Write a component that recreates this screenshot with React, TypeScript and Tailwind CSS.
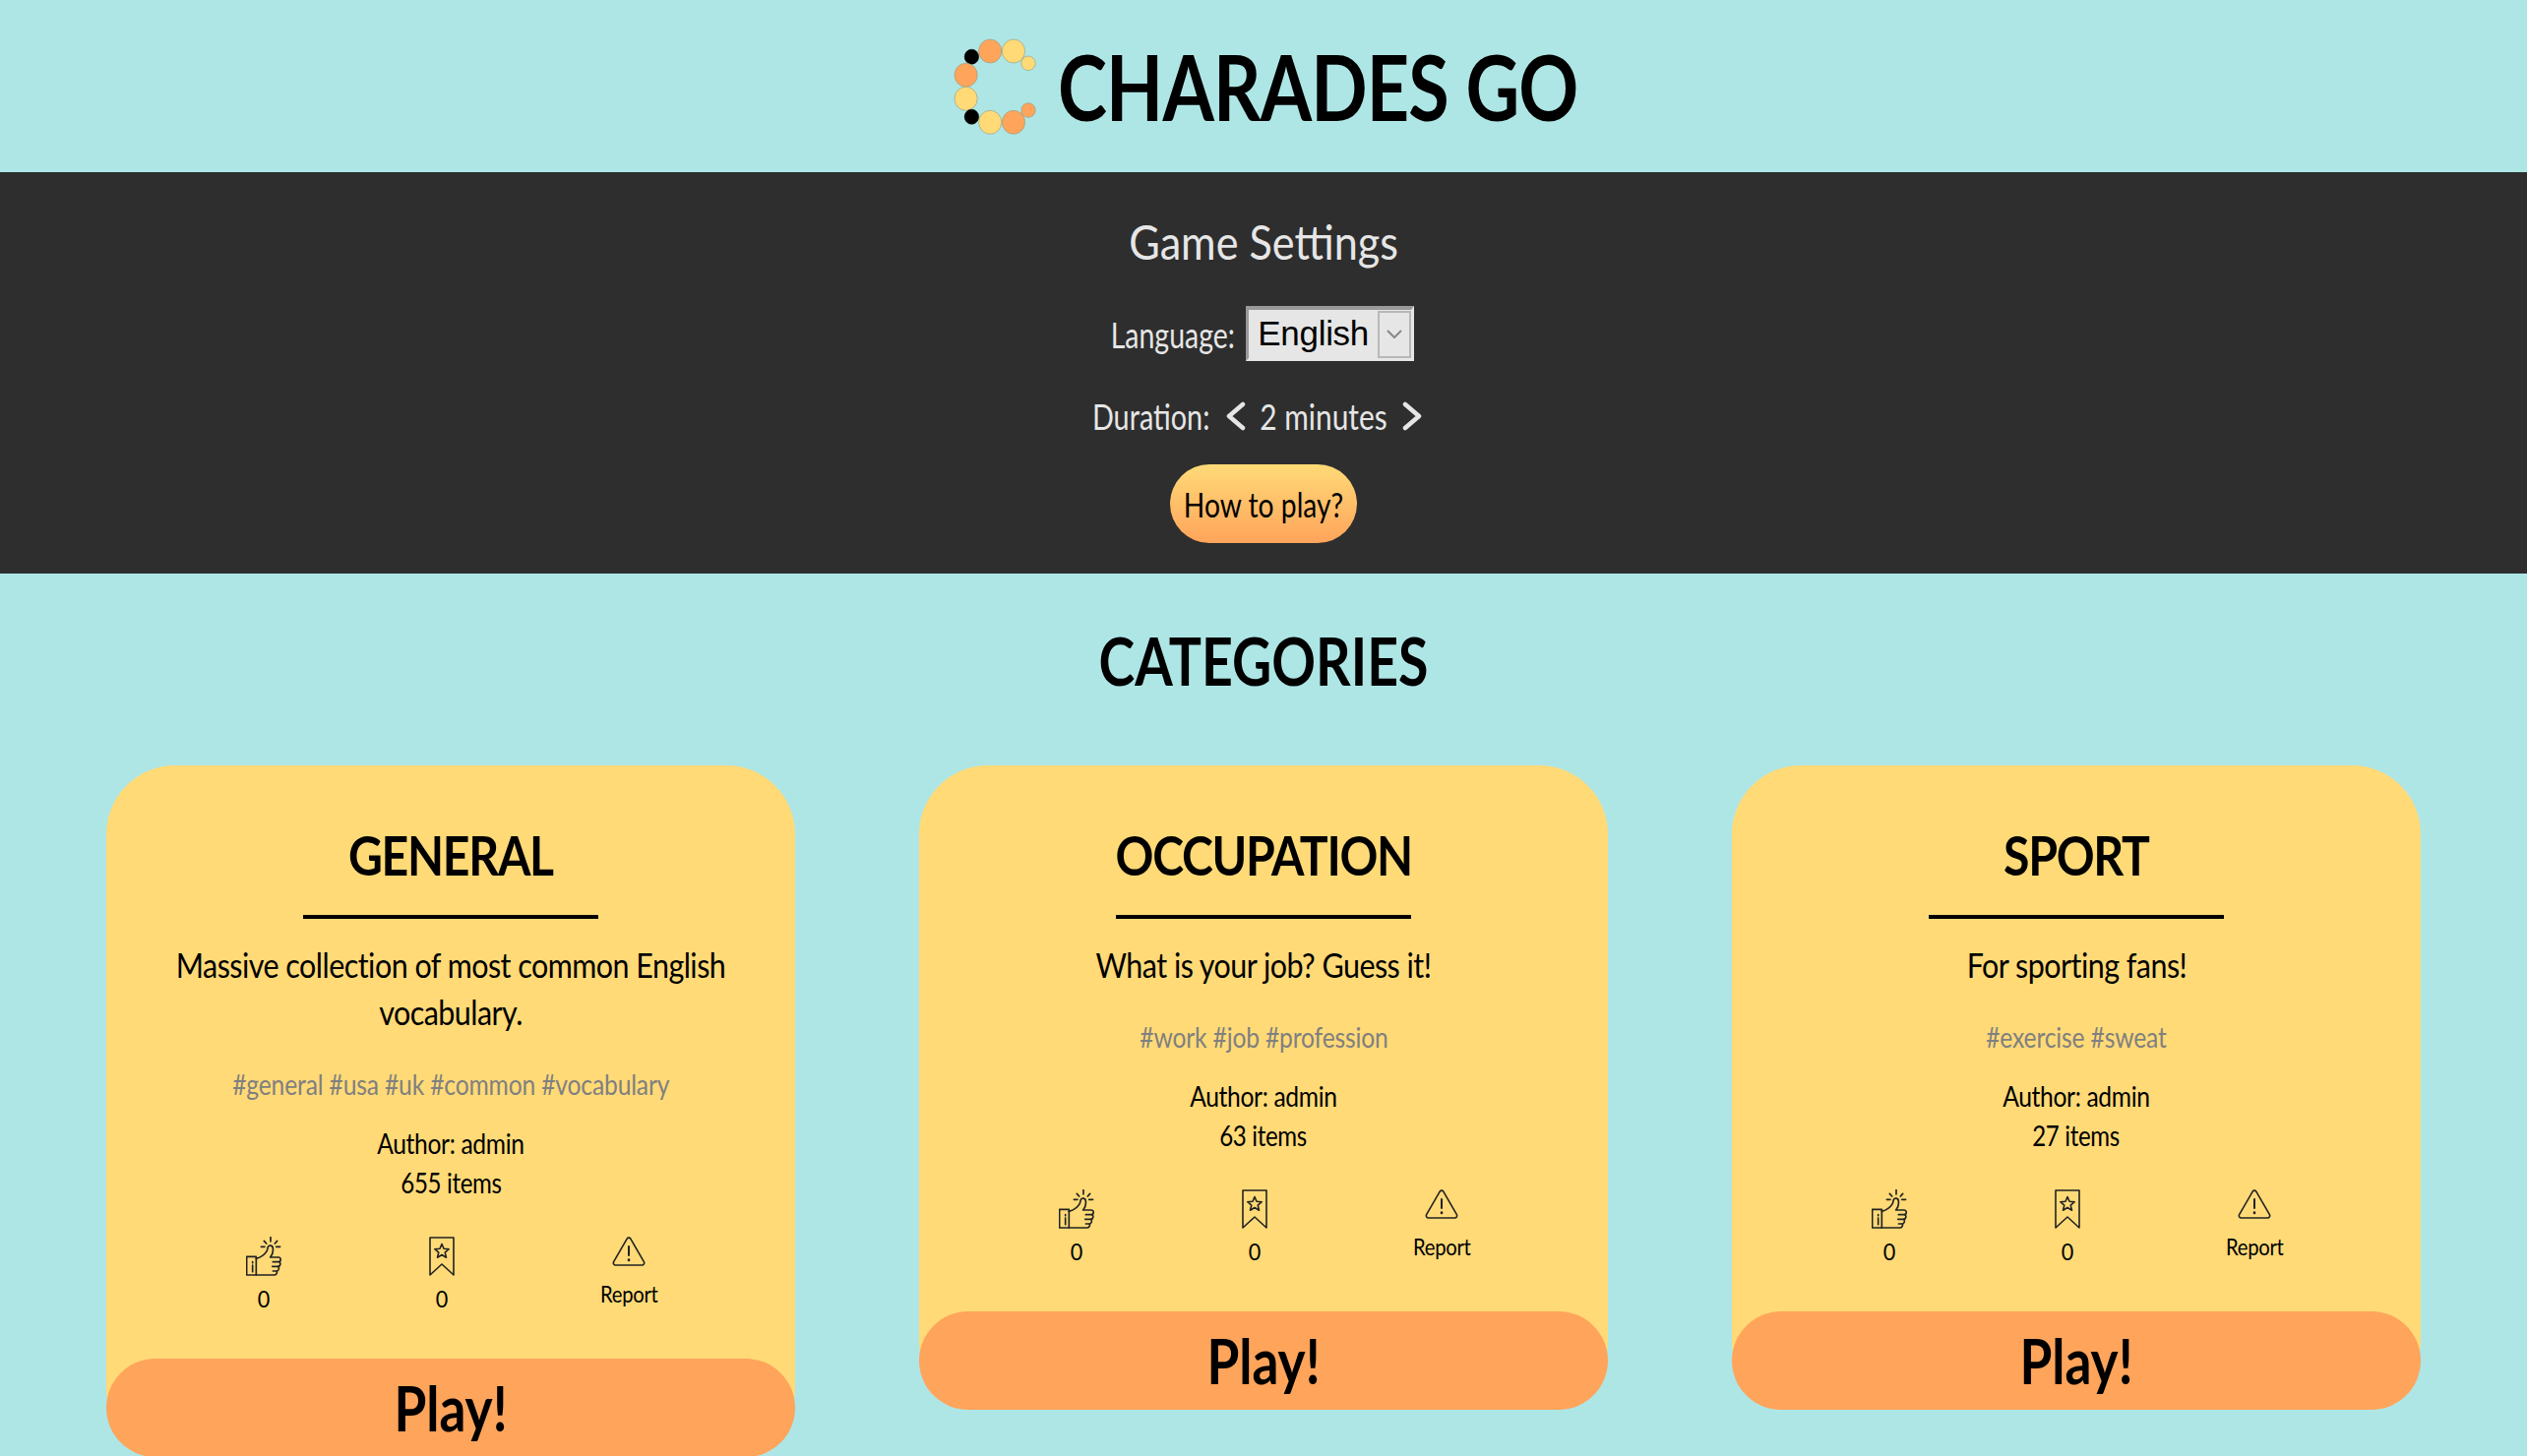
const Logo = () => (
  <svg width="86" height="102" viewBox="972 36 86 102" className="shrink-0">
    {[
      [990.4, 56.7, 7.2, 7.5, "#000", "#000"],
      [1009.2, 51, 11.6, 12, "#ffa45b", "#8f9a80"],
      [1033, 51, 11.6, 12, "#ffda77", "#8f9a80"],
      [1048, 63.3, 7.2, 7.3, "#ffda77", "#8f9a80"],
      [984.6, 75.3, 11.6, 12, "#ffa45b", "#8f9a80"],
      [984.6, 99.3, 11.6, 12, "#ffda77", "#8f9a80"],
      [990.4, 117.7, 7.2, 7.5, "#000", "#000"],
      [1009.2, 123.3, 11.6, 12, "#ffda77", "#8f9a80"],
      [1033, 123.3, 11.6, 12, "#ffa45b", "#8f9a80"],
      [1048, 111, 7.2, 7.3, "#ffa45b", "#8f9a80"],
    ].map(([cx, cy, rx, ry, f, s], i) => (
      <ellipse key={i} cx={cx as number} cy={cy as number} rx={rx as number} ry={ry as number} fill={f as string} stroke={s as string} strokeWidth="0.6" />
    ))}
  </svg>
);

const Thumb = () => (
  <svg width="36" height="40" viewBox="0 0 108 118" fill="none" stroke="#222" strokeWidth="5" strokeLinecap="round" strokeLinejoin="round">
    <rect x="2" y="60" width="29" height="56" />
    <path d="M20 76v3M20 86v20" />
    <path d="M31 66C45 62 58 52 64 42L67 30C70 24 82 25 82 35C84 48 79 56 74 62L100 62C108 63 107 75 101 76C107 78 105 90 98 90C102 94 100 104 94 104C96 110 92 116 86 116L31 116" />
    <path d="M101 76H82M98 90H80M94 104H82" />
    <path d="M75 1V14M55 12L62 20M95 12L88 20M46 30H57M92 30H104" />
  </svg>
);

const Bookmark = () => (
  <svg width="26" height="40" viewBox="0 0 26 40" fill="none" stroke="#222" strokeWidth="1.6" strokeLinejoin="round">
    <path d="M1 1H25V39L13 28L1 39Z" />
    <path d="M13 7.5L15 12.2L20.2 12.7L16.2 16.1L17.5 21.2L13 18.5L8.5 21.2L9.8 16.1L5.8 12.7L11 12.2Z" />
  </svg>
);

const Warning = () => (
  <svg width="34" height="30" viewBox="0 0 34 30" fill="none" stroke="#222" strokeWidth="1.6" strokeLinecap="round" strokeLinejoin="round">
    <path d="M15.2 2.2C16 0.8 18 0.8 18.8 2.2L32.4 25.6C33.2 27 32.2 29 30.4 29H3.6C1.8 29 0.8 27 1.6 25.6Z" />
    <path d="M17 10V19" strokeWidth="2" />
    <path d="M17 23.6V24" strokeWidth="2.6" />
  </svg>
);

const Chevron = ({ right }: { right?: boolean }) => (
  <svg width="20" height="30" viewBox="0 0 20 30" fill="none" stroke="#e6e6e6" strokeWidth="4.5" strokeLinecap="round" strokeLinejoin="round">
    <path d={right ? "M3 3L17 15L3 27" : "M17 3L3 15L17 27"} />
  </svg>
);

type Cat = { title: string; desc: string[]; tags: string; items: string };

const Card = ({ c }: { c: Cat }) => (
  <div className="w-[700px] bg-[#ffda77] rounded-[70px] flex flex-col items-center text-black text-center">
    <h3 className="mt-[61px] h-[60px] leading-[60px] text-[56px] font-bold tracking-[-1.5px] scale-x-[.86]">{c.title}</h3>
    <div className="mt-[31px] w-[300px] h-[4px] bg-black" />
    <div className="mt-[22px] text-[35px] leading-[48px] tracking-[-0.6px] scale-x-[.87]">
      {c.desc.map((d) => (
        <p key={d} className="whitespace-nowrap">{d}</p>
      ))}
    </div>
    <p className="mt-[30px] h-[40px] leading-[40px] text-[29px] text-[#808080] tracking-[-0.2px] scale-x-[.85]">{c.tags}</p>
    <p className="mt-[20px] h-[40px] leading-[40px] text-[28px] tracking-[-0.4px] scale-x-[.88]">Author: admin</p>
    <p className="h-[40px] leading-[40px] text-[28px] tracking-[-0.4px] scale-x-[.86]">{c.items}</p>
    <div className="mt-[35px] w-full h-[124px] flex leading-[28px]">
      <div className="ml-[110px] w-[100px] flex flex-col items-center">
        <Thumb />
        <span className="mt-[9px] text-[24px] scale-x-[.9]">0</span>
      </div>
      <div className="ml-[81px] w-[100px] flex flex-col items-center">
        <Bookmark />
        <span className="mt-[9px] text-[24px] scale-x-[.9]">0</span>
      </div>
      <div className="ml-[90px] w-[100px] flex flex-col items-center">
        <Warning />
        <span className="mt-[14px] text-[23px] tracking-[-0.3px] scale-x-[.88]">Report</span>
      </div>
    </div>
    <button className="w-full h-[100px] bg-[#ffa45b] rounded-[50px] font-bold text-black">
      <span className="block text-[64px] leading-[100px] whitespace-nowrap scale-x-[.83]">Play!</span>
    </button>
  </div>
);

const cats: Cat[] = [
  { title: "GENERAL", desc: ["Massive collection of most common English", "vocabulary."], tags: "#general #usa #uk #common #vocabulary", items: "655 items" },
  { title: "OCCUPATION", desc: ["What is your job? Guess it!"], tags: "#work #job #profession", items: "63 items" },
  { title: "SPORT", desc: ["For sporting fans!"], tags: "#exercise #sweat", items: "27 items" },
];

export default function App() {
  return (
    <div className="h-[1480px] overflow-hidden bg-[#aee6e6] font-['Lato',sans-serif]">
      <header className="h-[175px] flex items-center justify-center gap-[20px] pl-[5px]">
        <Logo />
        <h1 className="-mx-[58px] text-[92px] font-bold leading-none text-black tracking-[-1px] whitespace-nowrap scale-x-[.82]">CHARADES GO</h1>
      </header>
      <section className="h-[408px] bg-[#2e2e2e] text-[#e6e6e6] flex flex-col items-center">
        <h2 className="mt-[43px] h-[56px] leading-[56px] text-[48px] scale-x-[.9]">Game Settings</h2>
        <div className="mt-[37px] h-[56px] flex items-center gap-[9px] text-[36px] mr-[4px]">
          <span className="-mx-[15px] scale-x-[.79] mt-[2px]">Language:</span>
          <div className="w-[171px] h-[56px] ml-[1px] bg-[#e6e6e6] border-[3px] border-t-[4px] border-t-[#999999] border-l-[#999999] border-r-[#e6e6e6] border-b-[#e6e6e6] flex items-center text-black pl-[9px] font-['Liberation_Sans',sans-serif] text-[35px] tracking-[-0.3px] justify-between">
            <span>English</span>
            <span className="w-[34px] h-[48px] border-[2px] border-[#b8b8b8] flex items-center justify-center">
              <svg width="16" height="10" viewBox="0 0 16 10" fill="none" stroke="#888" strokeWidth="2">
                <path d="M1 1L8 8L15 1" />
              </svg>
            </span>
          </div>
        </div>
        <div className="mt-[28px] h-[56px] flex items-center text-[36px] mr-[13px]">
          <span className="-mx-[15px] scale-x-[.8]">Duration:</span>
          <span className="ml-[16px] -mr-[15px]"><Chevron /></span>
          <span className="ml-[16px] -mr-[1px] scale-x-[.83]">2 minutes</span>
          <span className="ml-[3px]"><Chevron right /></span>
        </div>
        <button className="mt-[21px] w-[190px] h-[80px] rounded-[40px] bg-gradient-to-b from-[#ffda77] to-[#ffa45b] text-black">
          <span className="block -mx-[10px] text-[34px] whitespace-nowrap scale-x-[.83]">How to play?</span>
        </button>
      </section>
      <h2 className="mt-[57px] h-[64px] leading-[64px] text-center text-[66px] font-bold text-black scale-x-[.84]">CATEGORIES</h2>
      <main className="mt-[74px] px-[108px] flex justify-between items-start">
        {cats.map((c) => (
          <Card key={c.title} c={c} />
        ))}
      </main>
    </div>
  );
}
